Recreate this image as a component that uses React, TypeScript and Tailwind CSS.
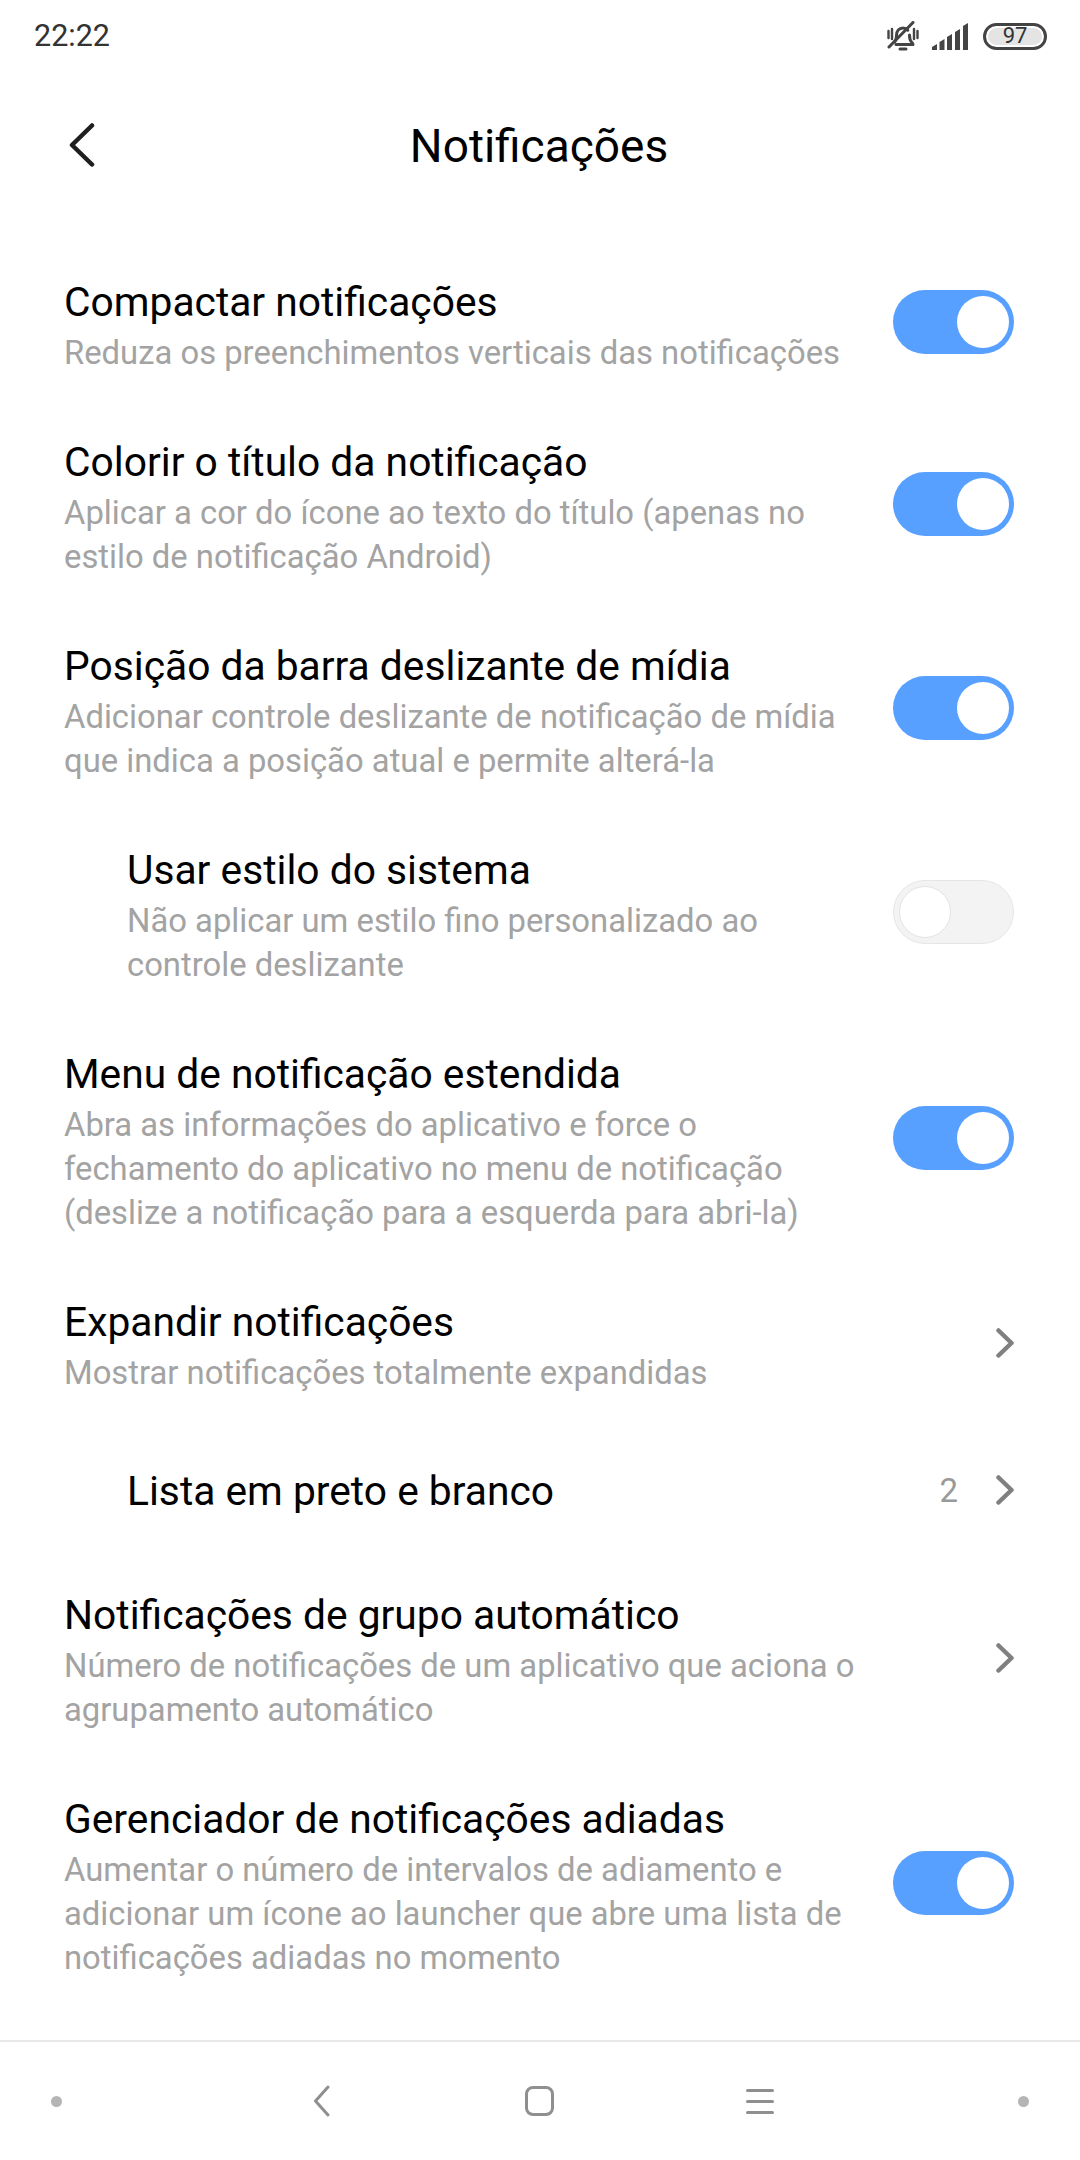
import React from 'react';

type RowProps = {
  title: string;
  summary?: string;
  indent?: boolean;
  toggle?: 'on' | 'off';
  count?: string;
  chevron?: boolean;
};

const rows: RowProps[] = [
  { title: 'Compactar notificações', summary: 'Reduza os preenchimentos verticais das notificações', toggle: 'on' },
  { title: 'Colorir o título da notificação', summary: 'Aplicar a cor do ícone ao texto do título (apenas no estilo de notificação Android)', toggle: 'on' },
  { title: 'Posição da barra deslizante de mídia', summary: 'Adicionar controle deslizante de notificação de mídia que indica a posição atual e permite alterá-la', toggle: 'on' },
  { title: 'Usar estilo do sistema', summary: 'Não aplicar um estilo fino personalizado ao controle deslizante', toggle: 'off', indent: true },
  { title: 'Menu de notificação estendida', summary: 'Abra as informações do aplicativo e force o fechamento do aplicativo no menu de notificação (deslize a notificação para a esquerda para abri-la)', toggle: 'on' },
  { title: 'Expandir notificações', summary: 'Mostrar notificações totalmente expandidas', chevron: true },
  { title: 'Lista em preto e branco', indent: true, count: '2', chevron: true },
  { title: 'Notificações de grupo automático', summary: 'Número de notificações de um aplicativo que aciona o agrupamento automático', chevron: true },
  { title: 'Gerenciador de notificações adiadas', summary: 'Aumentar o número de intervalos de adiamento e adicionar um ícone ao launcher que abre uma lista de notificações adiadas no momento', toggle: 'on' },
];

const Toggle = ({ on }: { on: boolean }) => (
  <div
    className={`mb-[5px] flex h-[64px] w-[121px] shrink-0 items-center rounded-full px-[5px] ${
      on ? 'justify-end bg-[#57a0ff]' : 'justify-start border border-[#e6e6e6] bg-[#f3f3f3]'
    }`}
  >
    <div className={`h-[52px] w-[52px] rounded-full bg-white ${on ? '' : 'border border-[#e4e4e4]'}`} />
  </div>
);

const Chevron = () => (
  <svg width="18" height="30" viewBox="0 0 18 30" fill="none" className="mb-[2px] shrink-0">
    <path d="M2.500 2.500 15.500 15 2.500 27.500" stroke="#808080" strokeWidth="4.500" strokeLinecap="round" strokeLinejoin="round" />
  </svg>
);

const Row = ({ title, summary, indent, toggle, count, chevron }: RowProps) => (
  <div className={`flex min-h-[133px] items-center justify-between pb-[28px] pr-[66px] pt-[30px] ${indent ? 'pl-[127px]' : 'pl-[64px]'}`}>
    <div className={indent ? 'w-[740px]' : 'w-[800px]'}>
      <div className="text-[40.750px] leading-[58px] text-black">{title}</div>
      {summary && <div className="text-[32.800px] leading-[44px] text-[#a3a3a3]">{summary}</div>}
    </div>
    <div className="flex items-center">
      {toggle && <Toggle on={toggle === 'on'} />}
      {count && <span className="mr-[38px] text-[33px] leading-[44px] text-[#999999]">{count}</span>}
      {chevron && <Chevron />}
    </div>
  </div>
);

const BellOff = () => (
  <svg width="32" height="30" viewBox="0 0 32 30" fill="none" stroke="#444444" strokeWidth="3" strokeLinecap="round" strokeLinejoin="round">
    <path d="M7.500 21c1.600-1.600 2-3.400 2-6.500 0-4.500 2.600-7.500 6.500-7.500 2 0 3.700.8 4.800 2.200M22.500 14c0 3.500.4 5.300 2 7 .8.8 1.500 1.500 1.500 2.500H9" />
    <path d="M13 28h6" strokeWidth="3" />
    <path d="M1.500 10v7M5 8v10M27 8v10M30.500 10v7" strokeWidth="2.400" />
    <path d="M26 1.500 2 26" strokeWidth="3" />
  </svg>
);

const Signal = () => (
  <svg width="36" height="27" viewBox="0 0 36 27" fill="#444444">
    <path d="M0 27v-3l5-3v6z" />
    <path d="M7.500 27v-8l5-3v11z" />
    <path d="M15 27V14l5-3v16z" />
    <path d="M23 27V9l5-3v21z" />
    <path d="M31 27V3l5-3v27z" />
  </svg>
);

const Battery = () => (
  <div className="flex h-[27px] w-[64px] rounded-full border-[3px] border-[#444444] p-[2px]">
    <div className="flex flex-1 items-center justify-center rounded-full bg-[#e4e4e4] text-[22px] leading-none text-[#333333]">97</div>
  </div>
);

export default function App() {
  return (
    <div className="flex h-[2160px] w-[1080px] flex-col bg-white font-['Roboto',sans-serif]">
      {/* status bar */}
      <div className="flex h-[72px] items-center justify-between pl-[34px] pr-[33px]">
        <span className="text-[30.500px] leading-none text-[#333333]">22:22</span>
        <div className="flex items-center gap-[13px]">
          <BellOff />
          <Signal />
          <div className="ml-[2px]"><Battery /></div>
        </div>
      </div>

      {/* header */}
      <div className="flex h-[146px] items-center pl-[69px]">
        <svg width="26" height="44" viewBox="0 0 26 44" fill="none">
          <path d="M23 2.500 3 22l20 19.500" stroke="#1f1f1f" strokeWidth="4.500" strokeLinecap="round" strokeLinejoin="round" />
        </svg>
        <div className="mt-[2px] flex-1 pr-[97px] text-center text-[46px] leading-none text-black">Notificações</div>
      </div>

      {/* settings list */}
      <div className="flex-1 pt-[25px]">
        {rows.map((r) => (
          <Row key={r.title} {...r} />
        ))}
      </div>

      {/* navigation bar */}
      <div className="flex h-[120px] items-center border-t-2 border-[#e8e8e8] pl-[51px]">
        <div className="h-[11px] w-[11px] rounded-full bg-[#b5b5b5]" />
        <svg width="17" height="32" viewBox="0 0 17 32" fill="none" className="ml-[251px]">
          <path d="M15 2 2.500 16 15 30" stroke="#8f8f8f" strokeWidth="3" strokeLinecap="round" strokeLinejoin="round" />
        </svg>
        <div className="ml-[195px] h-[30px] w-[29px] rounded-[8px] border-[3px] border-[#8f8f8f]" />
        <div className="ml-[192px] flex w-[28px] flex-col gap-[8px]">
          <div className="h-[3px] rounded-full bg-[#8f8f8f]" />
          <div className="h-[3px] rounded-full bg-[#8f8f8f]" />
          <div className="h-[3px] rounded-full bg-[#8f8f8f]" />
        </div>
        <div className="ml-[244px] h-[11px] w-[11px] rounded-full bg-[#b5b5b5]" />
      </div>
    </div>
  );
}
